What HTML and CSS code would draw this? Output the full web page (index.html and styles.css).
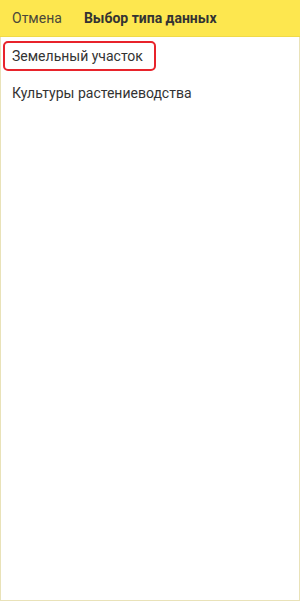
FILE: index.html
```html
<!DOCTYPE html>
<html lang="ru">
<head>
<meta charset="utf-8">
<link rel="stylesheet" href="styles.css">
</head>
<body>
<div class="screen">
  <header class="bar">
    <span class="cancel">Отмена</span>
    <span class="title">Выбор типа данных</span>
  </header>
  <ul class="list">
    <li class="item selected">Земельный участок</li>
    <li class="item">Культуры растениеводства</li>
  </ul>
</div>
</body>
</html>
```
FILE: styles.css
```css
html, body { margin: 0; padding: 0; background: #fff; }
body { font-family: Roboto, "Noto Sans", sans-serif; color: #333; }
.screen {
  box-sizing: border-box;
  width: 300px;
  height: 601px;
  border: 1px solid #e9e2b8;
  border-top: none;
  background: #fff;
}
.bar {
  box-sizing: border-box;
  height: 37px;
  background: #fde74f;
  border-bottom: 1px solid #f0da48;
  display: flex;
  align-items: center;
  font-size: 14px;
  margin: 0 -1px;
  padding-left: 12px;
}
.cancel { color: #4a473a; }
.title { font-weight: bold; color: #333; margin-left: 22px; }
.list {
  list-style: none;
  margin: 0;
  padding: 4px 2px;
  display: flex;
  flex-direction: column;
  gap: 7px;
}
.item {
  box-sizing: border-box;
  height: 30px;
  display: flex;
  align-items: center;
  padding: 0 11px 0 7px;
  border: 2px solid transparent;
  border-radius: 5px;
  font-size: 14px;
  width: fit-content;
}
.item.selected { border-color: #e8232b; }
```
